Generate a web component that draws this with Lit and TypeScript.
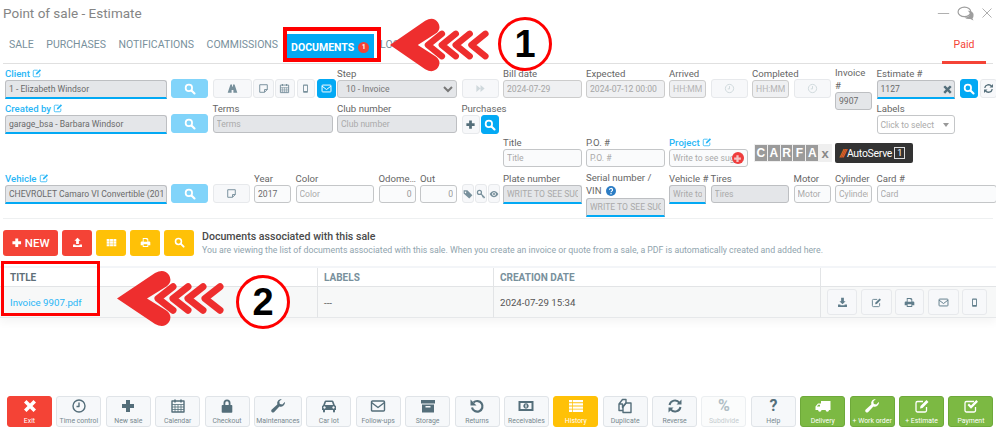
import { LitElement, html, css, svg, nothing } from "lit";
import { customElement } from "lit/decorators.js";

const s = (inner: unknown) => svg`<g fill="none" stroke="currentColor" stroke-width="1.4" stroke-linejoin="round">${inner}</g>`;
const icons: Record<string, unknown> = {
  search: svg`<g fill="none" stroke="currentColor"><circle cx="6.5" cy="6.5" r="4.3" stroke-width="2.3"/><line x1="10" y1="10" x2="14" y2="14" stroke-width="2.8" stroke-linecap="round"/></g>`,
  road: svg`<path d="M5 2h2.3v3.2h1.4V2H11l4 12H9.3v-4H6.7v4H1z"/>`,
  note: s(svg`<path d="M2.5 2.5h11v7l-4 4h-7z"/><path d="M13.5 9.5h-4v4"/>`),
  calendar: s(svg`<rect x="2" y="3" width="12" height="11"/><path d="M2 6.5h12M2 9h12M2 11.5h12M5 6.5V14M8 6.5V14M11 6.5V14" stroke-width=".8"/><path d="M5 1.5v3M11 1.5v3" stroke-width="1.6"/>`),
  mobile: svg`<path fill-rule="evenodd" d="M5.5 2h5a1 1 0 0 1 1 1v10a1 1 0 0 1-1 1h-5a1 1 0 0 1-1-1V3a1 1 0 0 1 1-1zM5.8 4v7.5h4.4V4z"/>`,
  mail: s(svg`<rect x="1.5" y="3" width="13" height="10" rx="1"/><path d="M1.5 4.5 8 9.5l6.5-5"/>`),
  forward: svg`<path d="M2 3l6 5-6 5zM8 3l6 5-6 5z"/>`,
  clock: s(svg`<circle cx="8" cy="8" r="6"/><path d="M8 4.5V8.5H5.5"/>`),
  times: svg`<path d="M4.5 2 8 5.5 11.5 2 14 4.5 10.5 8 14 11.5 11.5 14 8 10.5 4.5 14 2 11.5 5.5 8 2 4.5z"/>`,
  refresh: svg`<g fill="none" stroke="currentColor" stroke-width="2"><path d="M2.5 7A5.6 5.6 0 0 1 12.5 4.8"/><path d="M13.5 9A5.6 5.6 0 0 1 3.5 11.2"/></g><path d="M14.5 1.5v5h-5zM1.5 14.5v-5h5z"/>`,
  plus: svg`<path d="M6 2h4v4h4v4h-4v4H6v-4H2V6h4z"/>`,
  edit: svg`<g fill="none" stroke="currentColor" stroke-width="1.3"><path d="M12.5 9v3.5a1.500 1.500 0 0 1-1.500 1.500H3.500A1.500 1.500 0 0 1 2 12.500V5a1.500 1.500 0 0 1 1.500-1.500H9"/></g><path d="M6.500 8 12.500 2l2 2-6 6-2.500.5z"/>`,
  tag: svg`<path fill-rule="evenodd" d="M1 2h6l8 8-5 5-9-8zM4 4a1.200 1.200 0 1 0 .01 0z"/>`,
  key: svg`<g fill="none" stroke="currentColor"><circle cx="5.500" cy="5.500" r="3.200" stroke-width="2"/><path d="M8 8l6 6M11.500 11.500l-1.500 1.500M13.500 13.500l-1.500 1" stroke-width="1.800"/></g>`,
  eye: svg`<path fill-rule="evenodd" d="M1 8c2-3.500 4.500-5 7-5s5 1.500 7 5c-2 3.500-4.500 5-7 5s-5-1.500-7-5zM8 5a3 3 0 1 0 .01 0z"/><circle cx="8" cy="8" r="1.700"/>`,
  upload: svg`<path d="M8 1l4.500 4.500H10V10H6V5.500H3.500zM1.500 11H5v1h6v-1h3.500v3.500h-13z"/>`,
  download: svg`<path d="M6 1h4v5h2.500L8 10.500 3.500 6H6zM1.500 11H5v1h6v-1h3.500v3.500h-13z"/>`,
  th: svg`<path d="M1 3h4.200v3H1zM5.900 3h4.200v3H5.900zM10.800 3H15v3h-4.200zM1 6.700h4.200v3H1zM5.900 6.700h4.200v3H5.900zM10.800 6.700H15v3h-4.200zM1 10.400h4.200v3H1zM5.900 10.400h4.200v3H5.900zM10.800 10.400H15v3h-4.200z"/>`,
  print: svg`<path fill-rule="evenodd" d="M4 1.500h6.500L12 3v3.500h1.500A1.500 1.500 0 0 1 15 8v4h-3v2.500H4V12H1V8a1.500 1.500 0 0 1 1.500-1.500H4zM5.300 2.800v4.200h5.400V4h-1.300V2.800zM5.300 10.500v2.700h5.400v-2.700z"/>`,
  lock: svg`<path fill-rule="evenodd" d="M4.500 7V5a3.500 3.500 0 0 1 7 0v2h1a.8.8 0 0 1 .8.800V14a.8.8 0 0 1-.8.800h-9a.8.8 0 0 1-.8-.8V7.800a.8.8 0 0 1 .8-.8zM6.300 7h3.400V5a1.700 1.700 0 0 0-3.400 0z"/>`,
  wrench: svg`<path d="M15 4.200a4.300 4.300 0 0 1-5.600 4.300L4 14.200a1.800 1.800 0 0 1-2.500-2.500L7.300 6.400A4.300 4.300 0 0 1 11.800 1L9.300 3.500l.5 2.500 2.500.6L14.800 4z"/>`,
  car: svg`<path fill-rule="evenodd" d="M3.500 3.500A1.500 1.500 0 0 1 5 2.500h6a1.500 1.500 0 0 1 1.500 1L13.800 7 15 8.300V12h-1v1.500a1 1 0 0 1-2 0V12H4v1.500a1 1 0 0 1-2 0V12H1V8.300L2.200 7zM4 7h8l-1-3H5zM3.500 8.300a1.200 1.200 0 1 0 .01 0zM12.500 8.300a1.200 1.200 0 1 0 .01 0z"/>`,
  archive: svg`<path fill-rule="evenodd" d="M1 2h14v3.500H1zM2 6.500h12V14.500H2zM5.500 8v1.500h5V8z"/>`,
  undo: svg`<g fill="none" stroke="currentColor" stroke-width="2.200"><path d="M4.500 4.500A5.300 5.300 0 1 1 3 9.500"/></g><path d="M1.500 1.500v6h6z"/>`,
  money: svg`<path fill-rule="evenodd" d="M.5 3h15v10H.5zM2.500 5v6h11V5zM8 5.300a2.700 2.700 0 1 0 .01 0z"/><rect x="7.400" y="6.500" width="1.200" height="3" fill="#f5f7f9"/>`,
  list: svg`<path d="M1 2h14v2.300H1zM1 5.200h14v2.300H1zM1 8.400h14v2.300H1zM1 11.600h14v2.300H1z"/><path d="M4 2h.7v12H4z" fill="#ffc107"/>`,
  copy: s(svg`<path d="M2 6l3.500-4.500H9V5L5.500 9.500V6z M2 6v6.500h4"/><path d="M9 5h5v9.500H6V8.500z"/>`),
  truck: svg`<path fill-rule="evenodd" d="M6 3h9.500v9H14a1.700 1.700 0 0 1-3.400 0H6.500a1.700 1.700 0 0 1-3.400 0H.5V8.500L3 5.500h3zM1.800 8.500H5V6.800H3.300z"/>`,
  check: svg`<g fill="none" stroke="currentColor" stroke-width="1.300"><path d="M12.500 9v3.500a1.500 1.500 0 0 1-1.500 1.500H3.500A1.500 1.500 0 0 1 2 12.500V5a1.500 1.500 0 0 1 1.500-1.500H11"/></g><path d="M4.500 7 6 5.500l2 2L13.300 2 15 3.700 8 10.700z"/>`,
  minus: svg`<rect x="1" y="7.500" width="14" height="1"/>`,
  close: svg`<path d="M2 2l12 12M14 2 2 14" stroke="currentColor" fill="none" stroke-width="1.100"/>`,
  chat: svg`<g fill="none" stroke="currentColor" stroke-width="1.100"><ellipse cx="7" cy="6.500" rx="6" ry="4.500"/></g><path d="M10 5.500a5 3.800 0 0 1 5.500 4.500c0 1.300-.5 2-1 2.500l1 2-3-1.300A6 4 0 0 1 7 11.800c3 .2 5.500-1.800 5-3.800-.3-1-1-2-2-2.500z"/>`,
};
const ic = (n: string) => html`<svg class="ic" viewBox="0 0 16 16" fill="currentColor">${icons[n]}</svg>`;

interface F { c: number; sp?: number; r: number; rs?: number; label?: string; two?: boolean; blue?: boolean; help?: boolean; val?: string; ph?: string; cls?: string; x?: string; add?: boolean; }
const fields: F[] = [
  { c: 1, sp: 4, r: 1, label: "Client", blue: true, val: "1 - Elizabeth Windsor", cls: "ro under dark" },
  { c: 13, sp: 2, r: 1, label: "Bill date", val: "2024-07-29", cls: "dis" },
  { c: 15, sp: 2, r: 1, label: "Expected", val: "2024-07-12 00:00", cls: "dis" },
  { c: 17, r: 1, label: "Arrived", ph: "HH:MM", cls: "dis" },
  { c: 19, r: 1, label: "Completed", ph: "HH:MM", cls: "dis" },
  { c: 21, r: 1, rs: 2, label: "Invoice #", two: true, val: "9907", cls: "ro dark" },
  { c: 22, sp: 2, r: 1, label: "Estimate #", val: "1127", cls: "ro under dark", x: "times" },
  { c: 1, sp: 4, r: 2, label: "Created by", blue: true, val: "garage_bsa - Barbara Windsor", cls: "ro under dark" },
  { c: 6, sp: 3, r: 2, label: "Terms", ph: "Terms", cls: "ro" },
  { c: 9, sp: 3, r: 2, label: "Club number", ph: "Club number", cls: "ro" },
  { c: 13, sp: 2, r: 3, label: "Title", ph: "Title", cls: "plain" },
  { c: 15, sp: 2, r: 3, label: "P.O. #", ph: "P.O. #", cls: "plain" },
  { c: 17, sp: 2, r: 3, label: "Project", blue: true, ph: "Write to see suggestions", cls: "plain", add: true },
  { c: 1, sp: 4, r: 4, label: "Vehicle", blue: true, val: "CHEVROLET Camaro VI Convertible (2017)", cls: "ro under dark" },
  { c: 7, r: 4, label: "Year", val: "2017", cls: "plain dark" },
  { c: 8, sp: 2, r: 4, label: "Color", ph: "Color", cls: "plain" },
  { c: 10, r: 4, label: "Odome…", val: "0", cls: "plain right" },
  { c: 11, r: 4, label: "Out", val: "0", cls: "plain right" },
  { c: 13, sp: 2, r: 4, label: "Plate number", ph: "WRITE TO SEE SUGGESTIONS", cls: "ro under" },
  { c: 15, sp: 2, r: 4, label: "Serial number / VIN", two: true, help: true, ph: "WRITE TO SEE SUGGESTIONS", cls: "ro under" },
  { c: 17, r: 4, label: "Vehicle #", ph: "Write to see", cls: "ro under" },
  { c: 18, sp: 2, r: 4, label: "Tires", ph: "Tires", cls: "ro" },
  { c: 20, r: 4, label: "Motor", ph: "Motor", cls: "plain" },
  { c: 21, r: 4, label: "Cylinder", ph: "Cylinder", cls: "plain" },
  { c: 22, sp: 3, r: 4, label: "Card #", ph: "Card", cls: "plain" },
];

const tools: [string, string, string?][] = [
  ["Exit", "times", "red"], ["Time control", "clock"], ["New sale", "plus"], ["Calendar", "calendar"], ["Checkout", "lock"],
  ["Maintenances", "wrench", "wide"], ["Car lot", "car"], ["Follow-ups", "mail"], ["Storage", "archive"], ["Returns", "undo"],
  ["Receivables", "money"], ["History", "list", "yellow"], ["Duplicate", "copy"], ["Reverse", "refresh"], ["Subdivide", "%", "off"],
  ["Help", "?"], ["Delivery", "truck", "green"], ["+ Work order", "wrench", "green"], ["+ Estimate", "edit", "green"], ["Payment", "check", "green"],
];

const arrowInner = svg`<path fill="#ee2e2e" d="M0 29 38 3Q47-2 52 5 56 12 49 17L30 29 49 41Q56 46 52 53 47 60 38 55Z"/>
  <g fill="none" stroke="#ee2e2e" stroke-width="7" stroke-linecap="round" stroke-linejoin="round">
    <polyline points="56,17 41,29 56,41"/><polyline points="71,17 56,29 71,41"/><polyline points="86,17 71,29 86,41"/><polyline points="103,17 88,29 103,41"/>
  </g>`;

@customElement("app-root")
export class AppRoot extends LitElement {
  static styles = css`
    :host { display: flex; flex-direction: column; position: relative; width: 996px; height: 430px; overflow: hidden; background: #fff; font-family: Roboto, "Liberation Sans", sans-serif; color: #555; }
    * { box-sizing: border-box; }
    .ic { width: 1em; height: 1em; display: block; }
    .head { display: flex; align-items: center; height: 26px; padding: 0 3px; }
    .title { font-size: 13.5px; color: #858585; flex: 1; }
    .win { display: flex; align-items: center; color: #9e9e9e; }
    .win .ic:nth-child(1) { font-size: 13px; margin-right: 7.5px; }
    .win .ic:nth-child(2) { font-size: 17px; margin-right: 7px; }
    .win .ic:nth-child(3) { font-size: 12px; }
    .tabs { display: flex; align-items: center; height: 38px; border-bottom: 1px solid #e0e0e0; margin: 0 3px; padding-left: 6px; font-size: 10.5px; color: #78909c; position: relative; }
    .tab { margin-right: 12.6px; white-space: nowrap; }
    .tab.active { background: #03a9f4; color: #fff; font-weight: 700; height: 27px; width: 88px; flex: none; margin: 5px 6px 0 -4.6px; padding-left: 5px; display: flex; align-items: center; white-space: nowrap; font-size: 10.5px; }
    .tabs .spacer { flex: 1; }
    .paid { color: #f44336; width: 44px; height: 100%; border-bottom: 3px solid #f44336; display: flex; align-items: center; justify-content: center; margin-right: 7px; font-size: 10.5px; padding-top: 2px; margin-bottom: -1px; }
    .badge { display: inline-block; background: #f44336; color: #fff; width: 11px; height: 11px; line-height: 11px; border-radius: 50%; font-size: 7px; text-align: center; margin-left: 4px; }
    .form { display: grid; grid-template-columns: repeat(24, 37px); column-gap: 4.5px; grid-template-rows: 35px 34px 36px 46px; margin: 3px 0 0 5px; height: 151px; }
    .form > * { min-width: 0; }
    .lab { display: block; font-size: 9.6px; line-height: 13px; height: 13px; white-space: nowrap; color: #666; }
    .lab.blue { color: #29b6f6; font-weight: 500; }
    .lab .ic { display: inline-block; font-size: 10px; vertical-align: -1px; margin-left: 2px; }
    .lab.two { height: auto; line-height: 12.5px; white-space: normal; }
    .help { color: #2b7cc4; display: inline-block; font-size: 9px; vertical-align: -1px; }
    .wrap { position: relative; }
    input, select, .sel { width: 100%; height: 18px; border: 1px solid #c4c6c8; border-radius: 3px; font: 8.6px Roboto, sans-serif; padding: 0 3px; outline: none; background: #fafbfc; color: #999; display: block; }
    input::placeholder { color: #aaa; opacity: 1; }
    input.ro { background: #e4e6e9; border-color: #bdbfc2; }
    input.dis { background: #eff0f2; color: #a5a5a5; border-color: #ccc; }
    input.dis::placeholder { color: #b5b5b5; }
    input.under { border-bottom: 2px solid #03a9f4; border-radius: 3px 3px 0 0; height: 19px; }
    input.dark { color: #6a6a6a; }
    input.right { text-align: right; }
    select { background: #e4e6e9; color: #777; padding: 0 4px; }
    .sel { display: flex; align-items: center; justify-content: space-between; background: #fff; color: #aaa; height: 19px; }
    .sel i { border: 3px solid transparent; border-top: 4px solid #999; margin-top: 3px; margin-right: 2px; }
    .x { position: absolute; right: 2px; top: 17px; color: #546e7a; font-size: 11px; }
    .addc { position: absolute; right: 4px; top: 16px; width: 12px; height: 12px; border-radius: 50%; background: #ef3d3d; color: #f5c6c6; display: flex; align-items: center; justify-content: center; font-size: 9px; }
    .btn { display: flex; align-items: center; justify-content: center; height: 19px; border: 1px solid #e7e9ec; border-radius: 3px; background: #f7f8fa; color: #78909c; font-size: 11px; }
    .btn.lb { background: #81d4fa; border-color: #81d4fa; color: #fff; font-size: 12px; }
    .btn.b { background: #03a9f4; border-color: #03a9f4; color: #fff; }
    .btn.fade { color: #cfd8dc; }
    .btn.slate { color: #546e7a; }
    .btn.bs { font-size: 12px; }
    .top { margin-top: 12px; }
    .group { display: flex; gap: 1px; }
    .group .btn { flex: none; }
    .group.tight .btn { flex: 1; padding: 0; font-size: 10px; }
    .w39 { width: 39px; } .w21 { width: 21px; } .w20 { width: 20px; } .w18 { width: 18px; } .w17 { width: 17px; } .w19 { width: 19px; }
    .ml { margin-left: 1px; }
    .right-tools { gap: 2px; }
    .carfax { display: flex; gap: 1px; margin: 8px 0 0 2px; height: 18px; width: 78px; background: #efefef; padding: 1px; align-self: start; }
    .carfax span { flex: 1; background: #9b9b9b; color: #fff; font: 700 12px "Liberation Sans", sans-serif; display: flex; align-items: center; justify-content: center; }
    .carfax span:last-child { background: none; color: #888; align-items: flex-end; font-size: 13px; line-height: 14px; }
    .auto { margin: 7px 0 0 0; height: 20px; width: 78px; background: #333; border-radius: 2px; color: #fff; font-size: 10.5px; display: flex; align-items: center; padding-left: 5px; white-space: nowrap; letter-spacing: -.3px; align-self: start; }
    .auto b { color: #f26a21; font-style: italic; letter-spacing: -1px; margin-right: 1px; }
    .auto u { text-decoration: none; border: 1px solid #ddd; padding: 0 2px; margin-left: 2px; font-size: 9px; line-height: 10px; }
    hr { border: 0; border-top: 1px solid #eef0f1; margin: 0 3px; height: 0; }
    .docs { display: flex; margin-top: 10px; padding-left: 3px; height: 27px; align-items: center; }
    .dbtn { display: flex; align-items: center; justify-content: center; gap: 2px; height: 26px; border-radius: 3px; color: #fff; font-size: 11px; margin-right: 4px; width: 30px; }
    .dbtn.red { background: #f44336; }
    .dbtn.yel { background: #ffc107; }
    .dbtn.new { width: 55px; font-size: 11.5px; font-weight: 500; }
    .dtext { margin-left: 4px; }
    .dtext h4 { margin: 0; font-size: 10.6px; font-weight: 500; color: #4a4a4a; line-height: 15px; }
    .dtext p { margin: 0; font-size: 8.75px; color: #90a4ae; line-height: 13px; white-space: nowrap; }
    .table { margin-top: 10px; display: grid; grid-template-columns: 317px 176px 327px 176px; box-shadow: 0 5px 8px rgba(0,0,0,.04); border-top: 2px solid #f3f5f8; }
    .th { height: 19px; border-bottom: 1px solid #e2e4e6; border-left: 1px solid #e2e4e6; padding-left: 6px; font-size: 10px; font-weight: 700; color: #78909c; display: flex; align-items: center; }
    .th.first { border-left: 0; padding-left: 10px; color: #5f6f78; }
    .td { height: 31px; background: #f7f8f8; border-bottom: 1px solid #e6e8ea; border-left: 1px solid #e2e4e6; padding-left: 6px; font-size: 9.7px; color: #555; display: flex; align-items: center; }
    .td.first { border-left: 0; padding-left: 10px; color: #29b6f6; }
    .td.acts { gap: 3.5px; padding-left: 6px; }
    .td.acts .btn { height: 26px; font-size: 11px; color: #607d8b; }
    .w30 { width: 30px; } .w31 { width: 31px; } .w29 { width: 29px; } .w25 { width: 25px; }
    .bar { margin-top: auto; display: flex; gap: 4.4px; padding: 0 0 3px 7px; }
    .tool { width: 45px; height: 31px; border: 1px solid #e0e4e8; border-radius: 3px; background: #f6f8fa; color: #546e7a; display: flex; flex-direction: column; align-items: center; justify-content: flex-start; padding-top: 1px; font-size: 16px; flex: none; }
    .tool span { font-size: 6.9px; color: #78888f; white-space: nowrap; line-height: 10px; margin-top: 2px; }
    .tool b { line-height: 16px; height: 16px; font-size: 16px; }
    .tool.wide { width: 48px; }
    .tool.red { background: #f44336; border-color: #f44336; color: #fff; }
    .tool.yellow { background: #ffc107; border-color: #ffc107; color: #fff; }
    .tool.green { background: #7cb943; border-color: #6ea93a; color: #fff; }
    .tool.red span, .tool.yellow span, .tool.green span { color: #fff; }
    .tool.off { color: #b0bec5; background: #fbfcfc; border-color: #eceff1; }
    .tool.off span { color: #c5ccd0; }
    .box { position: absolute; border: 3px solid #f00; pointer-events: none; }
    .box1 { left: 283px; top: 27px; width: 98px; height: 35px; border-width: 4px; }
    .box2 { left: 1px; top: 261px; width: 99px; height: 55px; }
    .arrow-shape { position: absolute; display: block; }
    .a1 { left: 390px; top: 18px; width: 100px; height: 54px; }
    .a2 { left: 117px; top: 270px; width: 108px; height: 57px; }
    .circ { position: absolute; width: 54px; height: 54px; border: 3px solid #f00; border-radius: 50%; background: #fff; color: #000; font: 700 38px/48px "Liberation Sans", sans-serif; text-align: center; }
    .c1 { left: 498px; top: 17px; }
    .c2 { left: 236px; top: 275px; }
  `;

  private field(f: F) {
    return html`<div class="wrap" style="grid-column:${f.c} / span ${f.sp ?? 1};grid-row:${f.r} / span ${f.rs ?? 1}">
      <span class="lab ${f.blue ? "blue" : ""} ${f.two ? "two" : ""}">${f.label}${f.blue ? ic("edit") : nothing}${f.help ? html` <span class="help"><svg class="ic" viewBox="0 0 16 16"><circle cx="8" cy="8" r="8" fill="currentColor"/><path d="M5.5 6.2a2.500 2.300 0 1 1 3.500 2.100c-.7.400-1 .8-1 1.700" fill="none" stroke="#fff" stroke-width="1.8"/><rect x="7" y="11.3" width="2" height="2" fill="#fff"/></svg></span>` : nothing}</span>
      <input class=${f.cls ?? ""} .value=${f.val ?? ""} placeholder=${f.ph ?? ""} readonly />
      ${f.x ? html`<span class="x">${ic(f.x)}</span>` : nothing}
      ${f.add ? html`<span class="addc">${ic("plus")}</span>` : nothing}
    </div>`;
  }
  private at(c: number, r: number, sp = 1) { return `grid-column:${c} / span ${sp};grid-row:${r}`; }

  render() {
    return html`
      <div class="head"><div class="title">Point of sale - Estimate</div><div class="win">${ic("minus")}${ic("chat")}${ic("close")}</div></div>
      <div class="tabs">
        <span class="tab">SALE</span><span class="tab">PURCHASES</span><span class="tab">NOTIFICATIONS</span><span class="tab">COMMISSIONS</span>
        <span class="tab active">DOCUMENTS<span class="badge">1</span></span><span class="tab">LOG</span>
        <span class="spacer"></span><span class="paid">Paid</span>
      </div>
      <div class="form">
        ${fields.map((f) => this.field(f))}
        <div class="btn lb top" style=${this.at(5, 1)}>${ic("search")}</div>
        <div class="group top" style=${this.at(6, 1, 3)}>
          <div class="btn w39">${ic("road")}</div><div class="btn w21">${ic("note")}</div><div class="btn w20">${ic("calendar")}</div><div class="btn w18 ml">${ic("mobile")}</div><div class="btn b w19 ml">${ic("mail")}</div>
        </div>
        <div style=${this.at(9, 1, 3)}><span class="lab">Step</span><select><option>10 - Invoice</option></select></div>
        <div class="btn fade top" style=${this.at(12, 1)}>${ic("forward")}</div>
        <div class="btn fade top" style=${this.at(18, 1)}>${ic("clock")}</div>
        <div class="btn fade top" style=${this.at(20, 1)}>${ic("clock")}</div>
        <div class="group top right-tools" style=${this.at(24, 1)}><div class="btn b bs w18">${ic("search")}</div><div class="btn slate w17">${ic("refresh")}</div></div>
        <div class="btn lb top" style=${this.at(5, 2)}>${ic("search")}</div>
        <div style=${this.at(12, 2)}><span class="lab">Purchases</span><div class="group"><div class="btn slate w18">${ic("plus")}</div><div class="btn b bs w18">${ic("search")}</div></div></div>
        <div style=${this.at(22, 2, 2)}><span class="lab">Labels</span><div class="sel"><span>Click to select</span><i></i></div></div>
        <div class="carfax" style=${this.at(19, 3, 2)}><span>C</span><span>A</span><span>R</span><span>F</span><span>A</span><span>x</span></div>
        <div class="auto" style=${this.at(21, 3, 2)}><b>///</b>AutoServe<u>1</u></div>
        <div class="btn lb top" style=${this.at(5, 4)}>${ic("search")}</div>
        <div class="btn top" style=${this.at(6, 4)}>${ic("note")}</div>
        <div class="group tight top" style=${this.at(12, 4)}><div class="btn">${ic("tag")}</div><div class="btn">${ic("key")}</div><div class="btn">${ic("eye")}</div></div>
      </div>
      <hr />
      <div class="docs">
        <div class="dbtn red new">${ic("plus")}NEW</div><div class="dbtn red">${ic("upload")}</div><div class="dbtn yel">${ic("th")}</div><div class="dbtn yel">${ic("print")}</div><div class="dbtn yel">${ic("search")}</div>
        <div class="dtext"><h4>Documents associated with this sale</h4><p>You are viewing the list of documents associated with this sale. When you create an invoice or quote from a sale, a PDF is automatically created and added here.</p></div>
      </div>
      <div class="table">
        <div class="th first">TITLE</div><div class="th">LABELS</div><div class="th">CREATION DATE</div><div class="th"></div>
        <div class="td first">Invoice 9907.pdf</div><div class="td">---</div><div class="td">2024-07-29 15:34</div>
        <div class="td acts">
          <div class="btn w30">${ic("download")}</div><div class="btn w31">${ic("edit")}</div><div class="btn w29">${ic("print")}</div><div class="btn w31">${ic("mail")}</div><div class="btn w25">${ic("mobile")}</div>
        </div>
      </div>
      <div class="bar">
        ${tools.map(([t, i, c]) => html`<div class="tool ${c ?? ""}">${icons[i] ? ic(i) : html`<b>${i}</b>`}<span>${t}</span></div>`)}
      </div>
      <div class="box box1"></div>
      <svg class="arrow-shape a1" viewBox="0 0 108 58" preserveAspectRatio="none">${arrowInner}</svg>
      <div class="circ c1">1</div>
      <div class="box box2"></div>
      <svg class="arrow-shape a2" viewBox="0 0 108 58" preserveAspectRatio="none">${arrowInner}</svg>
      <div class="circ c2">2</div>
    `;
  }
}
